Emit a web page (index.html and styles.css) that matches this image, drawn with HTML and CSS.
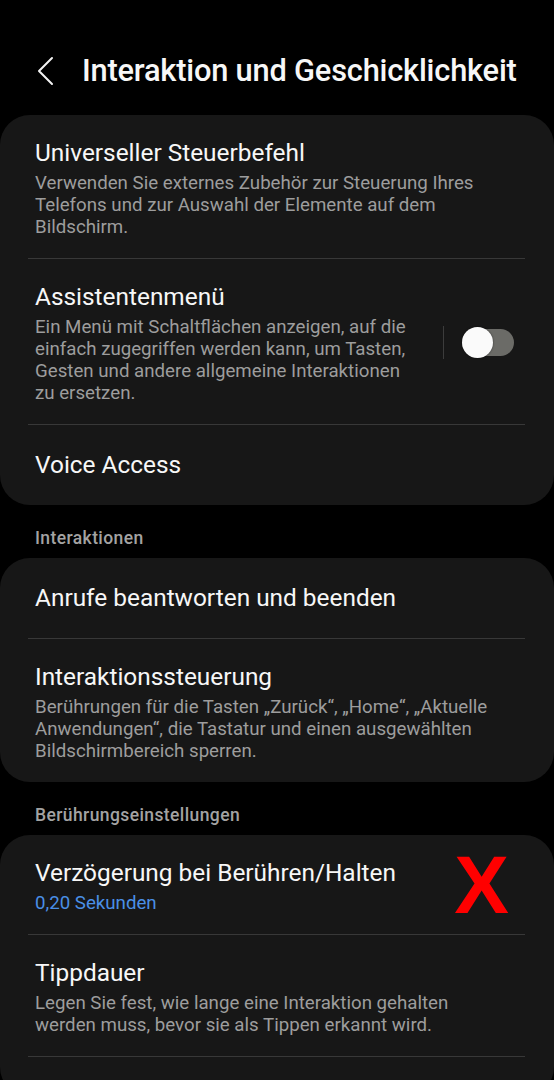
FILE: index.html
```html
<!DOCTYPE html>
<html lang="de">
<head>
    <meta charset="UTF-8">
    <meta name="viewport" content="width=device-width, initial-scale=1.0">
    <title>Interaktion und Geschicklichkeit</title>
    <link rel="stylesheet" href="styles.css">
</head>
<body>
    <header class="topbar">
        <svg class="back-icon" width="18" height="30" viewBox="0 0 18 30">
            <polyline points="16,2 3,15 16,28" fill="none" stroke="#f2f2f2" stroke-width="2" stroke-linecap="round" stroke-linejoin="round"/>
        </svg>
        <h1>Interaktion und Geschicklichkeit</h1>
    </header>

    <section class="card">
        <div class="item">
            <div class="item-title">Universeller Steuerbefehl</div>
            <div class="item-sub">Verwenden Sie externes Zubehör zur Steuerung Ihres Telefons und zur Auswahl der Elemente auf dem Bildschirm.</div>
        </div>
        <div class="item item-switch">
            <div class="item-text">
                <div class="item-title">Assistentenmenü</div>
                <div class="item-sub">Ein Menü mit Schaltflächen anzeigen, auf die einfach zugegriffen werden kann, um Tasten, Gesten und andere allgemeine Interaktionen zu ersetzen.</div>
            </div>
            <div class="switch-area">
                <span class="switch-line"></span>
                <span class="switch"><span class="knob"></span></span>
            </div>
        </div>
        <div class="item single">
            <div class="item-title">Voice Access</div>
        </div>
    </section>

    <div class="section-label">Interaktionen</div>
    <section class="card">
        <div class="item single">
            <div class="item-title">Anrufe beantworten und beenden</div>
        </div>
        <div class="item">
            <div class="item-title">Interaktionssteuerung</div>
            <div class="item-sub">Berührungen für die Tasten „Zurück“, „Home“, „Aktuelle Anwendungen“, die Tastatur und einen ausgewählten Bildschirmbereich sperren.</div>
        </div>
    </section>

    <div class="section-label">Berührungseinstellungen</div>
    <section class="card open-end">
        <div class="item marked">
            <div class="item-title">Verzögerung bei Berühren/Halten</div>
            <div class="item-sub value">0,20 Sekunden</div>
            <span class="mark">X</span>
        </div>
        <div class="item">
            <div class="item-title">Tippdauer</div>
            <div class="item-sub">Legen Sie fest, wie lange eine Interaktion gehalten werden muss, bevor sie als Tippen erkannt wird.</div>
        </div>
    </section>
</body>
</html>
```

FILE: styles.css
```css
body {
    margin: 0;
    background-color: #000;
    color: #f5f5f5;
    font-family: Roboto, "Noto Sans", sans-serif;
}
.topbar {
    display: flex;
    align-items: center;
    height: 115px;
    box-sizing: border-box;
    padding: 26px 0 0 36px;
}
.back-icon {
    flex-shrink: 0;
}
.topbar h1 {
    margin: 0 0 0 28px;
    font-size: 30.8px;
    font-weight: 500;
    color: #f7f7f7;
    letter-spacing: -0.2px;
    white-space: nowrap;
}
.card {
    background-color: #171717;
    border-radius: 30px;
    padding: 0 29px 0 28px;
}
.card.open-end {
    padding-bottom: 40px;
}
.open-end .item:last-child {
    border-bottom: 1px solid #383838;
}
.item {
    padding: 22px 20px 20px 7px;
    border-top: 1px solid #383838;
}
.item:first-child {
    border-top: none;
}
.item.single {
    padding-top: 24px;
    padding-bottom: 24px;
}
.item-title {
    font-size: 24.4px;
    line-height: 32px;
    color: #f7f7f7;
}
.item-sub {
    margin-top: 3px;
    font-size: 18.7px;
    line-height: 22px;
    color: #9d9d9d;
}
.item-sub.value {
    color: #4a8fe6;
}
.item-switch {
    display: flex;
    align-items: center;
    padding-right: 7px;
}
.item-text {
    flex: 1;
}
.switch-area {
    display: flex;
    align-items: center;
    width: 103px;
    box-sizing: border-box;
    padding-left: 28px;
    flex-shrink: 0;
}
.switch-line {
    width: 1px;
    height: 33px;
    background-color: #3c3c3c;
}
.switch {
    position: relative;
    margin-left: 18px;
    width: 52px;
    height: 27px;
    border-radius: 14px;
    background-color: #6b6b67;
}
.knob {
    position: absolute;
    left: 0;
    top: -2px;
    width: 31px;
    height: 31px;
    border-radius: 50%;
    background-color: #fafafa;
    box-shadow: 0 0 2px rgba(0, 0, 0, 0.6);
}
.section-label {
    padding: 23px 35px 10px;
    font-size: 17.5px;
    line-height: 20px;
    font-weight: 500;
    letter-spacing: 0.4px;
    color: #a3a3a3;
}
.marked {
    position: relative;
}
.mark {
    position: absolute;
    right: 16px;
    top: 0;
    font-family: "Liberation Sans", Arial, sans-serif;
    font-weight: bold;
    font-size: 82px;
    line-height: 100px;
    color: #ff0000;
}
```
